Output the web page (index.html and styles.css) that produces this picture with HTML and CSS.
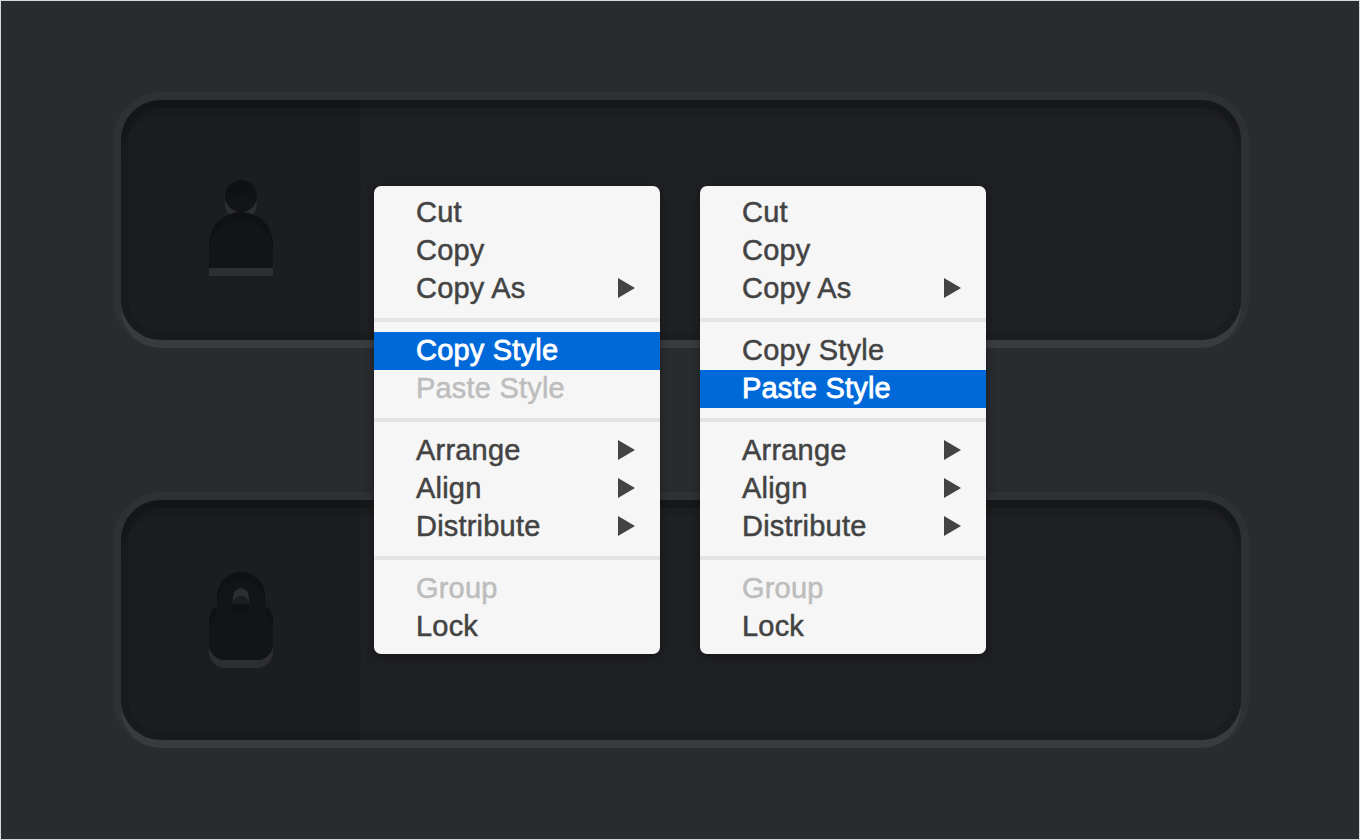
FILE: index.html
```html
<!DOCTYPE html>
<html lang="en">
<head>
<meta charset="utf-8">
<title>Copy and Paste Style</title>
<link rel="stylesheet" href="styles.css">
</head>
<body>
<main class="stage">
  <section class="field">
    <div class="field-icon">
      <svg class="glyph" width="64" height="96" viewBox="0 0 64 96">
        <circle class="glow" cx="32" cy="24" r="16"/>
        <path class="glow" d="M0 96V72A32 32 0 0 1 64 72V96Z"/>
        <circle class="rim" cx="32" cy="16" r="16"/>
        <path class="rim" d="M0 88V64A32 32 0 0 1 64 64V88Z"/>
        <path class="core" d="M18 23A15.5 15.5 0 0 1 46 23A16 16 0 0 1 18 23Z"/>
        <path class="core" d="M0 88V72A32 32 0 0 1 64 72V88Z"/>
      </svg>
    </div>
  </section>
  <section class="field">
    <div class="field-icon">
      <svg class="glyph" width="64" height="96" viewBox="0 0 64 96">
        <rect class="glow" y="40" width="64" height="56" rx="16"/>
        <path class="glow" d="M24 32V24A8 8 0 0 1 40 24V32Z"/>
        <path class="rim" fill-rule="evenodd" d="M8 34V24A24 24 0 0 1 56 24V34Q64 39 64 48V72A16 16 0 0 1 48 88H16A16 16 0 0 1 0 72V48Q0 39 8 34ZM24 32H40V24A8 8 0 0 0 24 24Z"/>
        <path class="core" fill-rule="evenodd" d="M8 42V32A24 24 0 0 1 56 32V42Q64 47 64 56V72A16 16 0 0 1 48 88H16A16 16 0 0 1 0 72V56Q0 47 8 42ZM24 40H40V24A8 8 0 0 0 24 24Z"/>
        <path class="hole" d="M24 32A8 8 0 0 1 40 32Z"/>
      </svg>
    </div>
  </section>

  <div class="menus">
    <nav class="menu">
      <div class="item">Cut</div>
      <div class="item">Copy</div>
      <div class="item">Copy As<svg class="arrow" width="17" height="20"><path d="M0 0L17 10L0 20Z"/></svg></div>
      <hr class="rule">
      <div class="item selected">Copy Style</div>
      <div class="item disabled">Paste Style</div>
      <hr class="rule">
      <div class="item">Arrange<svg class="arrow" width="17" height="20"><path d="M0 0L17 10L0 20Z"/></svg></div>
      <div class="item">Align<svg class="arrow" width="17" height="20"><path d="M0 0L17 10L0 20Z"/></svg></div>
      <div class="item">Distribute<svg class="arrow" width="17" height="20"><path d="M0 0L17 10L0 20Z"/></svg></div>
      <hr class="rule">
      <div class="item disabled">Group</div>
      <div class="item">Lock</div>
    </nav>
    <nav class="menu">
      <div class="item">Cut</div>
      <div class="item">Copy</div>
      <div class="item">Copy As<svg class="arrow" width="17" height="20"><path d="M0 0L17 10L0 20Z"/></svg></div>
      <hr class="rule">
      <div class="item">Copy Style</div>
      <div class="item selected">Paste Style</div>
      <hr class="rule">
      <div class="item">Arrange<svg class="arrow" width="17" height="20"><path d="M0 0L17 10L0 20Z"/></svg></div>
      <div class="item">Align<svg class="arrow" width="17" height="20"><path d="M0 0L17 10L0 20Z"/></svg></div>
      <div class="item">Distribute<svg class="arrow" width="17" height="20"><path d="M0 0L17 10L0 20Z"/></svg></div>
      <hr class="rule">
      <div class="item disabled">Group</div>
      <div class="item">Lock</div>
    </nav>
  </div>
</main>
</body>
</html>
```
FILE: styles.css
```css
* { box-sizing: border-box; }
body { margin: 0; }

.stage {
  position: relative;
  display: flex;
  flex-direction: column;
  gap: 160px;
  width: 1360px;
  height: 840px;
  padding: 99px 118px 0 120px;
  overflow: hidden;
  border: 1px solid #d3d9dd;
  background: #2a2b2e;
  font-family: "Liberation Sans", Arial, sans-serif;
}

.field {
  flex: none;
  width: 1120px;
  height: 240px;
  border-radius: 40px;
  background: linear-gradient(90deg, #1c1d20 240px, #1f2023 240px);
  box-shadow:
    inset 0 8px 0 rgba(0, 0, 0, 0.05),
    inset 0 0 0 8px rgba(0, 0, 0, 0.09),
    inset 0 16px 0 rgba(0, 0, 0, 0.09),
    0 8px 0 #3a3b3e,
    0 0 0 8px #2f3033;
}

.field-icon {
  display: flex;
  justify-content: center;
  width: 240px;
  padding-top: 80px;
}
.field + .field .field-icon { padding-top: 72px; }

.glyph { display: block; }
.glow { fill: #2d2e31; }
.rim { fill: #101113; }
.core { fill: #131416; }
.hole { fill: #1c1d20; }

.menus {
  position: absolute;
  top: 185px;
  left: 373px;
  display: flex;
  gap: 40px;
}

.menu {
  width: 286px;
  height: 468px;
  padding: 8px 0;
  border-radius: 7px;
  background: #f6f6f6;
  box-shadow: 0 2px 10px rgba(0, 0, 0, 0.35);
}

.item {
  display: flex;
  align-items: center;
  justify-content: space-between;
  height: 38px;
  padding: 0 25px 2px 42px;
  color: #434343;
  font-size: 29px;
  line-height: 36px;
  letter-spacing: 0.2px;
  white-space: nowrap;
  -webkit-text-stroke: 0.5px currentColor;
}
.selected {
  background: #0069d9;
  color: #fff;
  -webkit-text-stroke-width: 0.8px;
}
.disabled { color: #bdbdbd; }

.arrow { margin-bottom: 1px; fill: #434343; }

.rule {
  height: 4px;
  margin: 10px 0;
  border: 0;
  background: #e4e4e4;
}
```
